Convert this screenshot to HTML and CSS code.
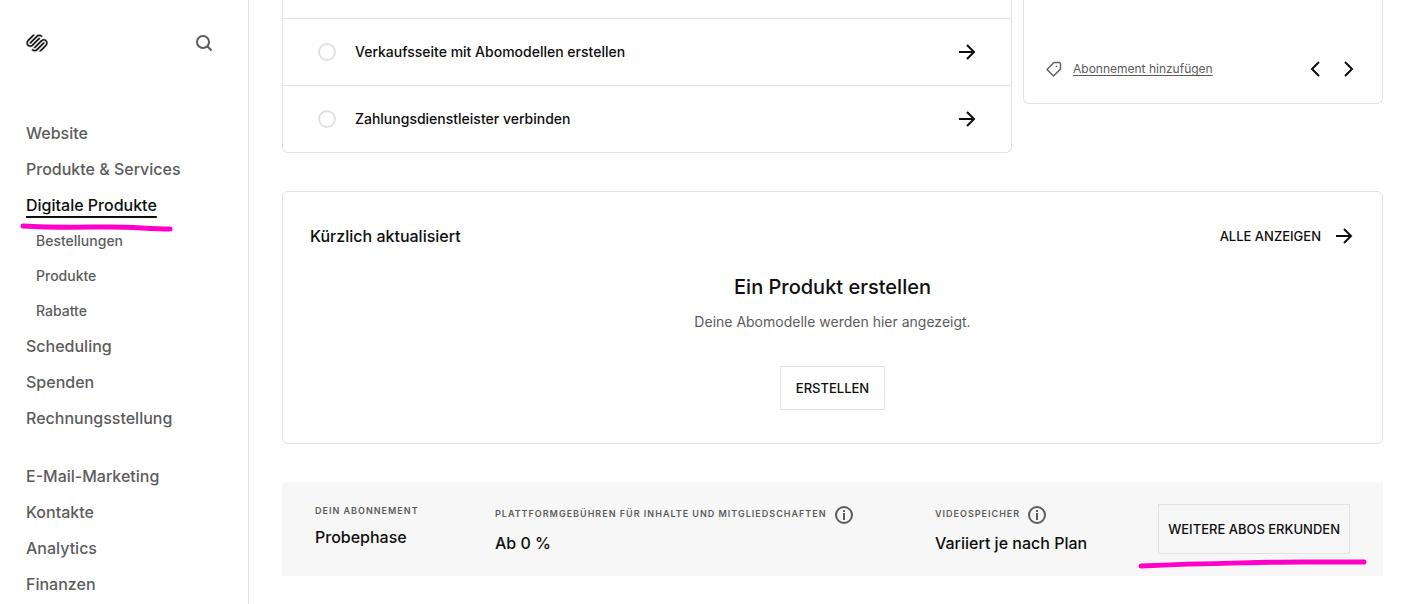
FILE: index.html
```
<!DOCTYPE html>
<html lang="de">
<head>
  <meta charset="UTF-8">
  <meta name="viewport" content="width=device-width, initial-scale=1.0">
  <title>Digitale Produkte</title>
  <link rel="stylesheet" href="styles.css">
</head>
<body>
  <svg class="sprite" aria-hidden="true">
    <symbol id="arrow" viewBox="0 0 18 16">
      <path d="M1 8h15M9 1l7 7-7 7" fill="none" stroke="currentColor" stroke-width="2"/>
    </symbol>
    <symbol id="info" viewBox="0 0 18 18">
      <circle cx="9" cy="9" r="8" fill="none" stroke="currentColor" stroke-width="2"/>
      <path d="M8 4h2v2H8zM8 7h2v7H8z" fill="currentColor"/>
    </symbol>
  </svg>

  <aside class="sidebar">
    <div class="sidebar-top">
      <a href="#" aria-label="Startseite">
        <svg class="logo" viewBox="0 0 24 24"><path d="M22.655 8.719c-1.802-1.801-4.726-1.801-6.564 0l-7.351 7.35c-.45.45-.45 1.2 0 1.65.45.449 1.2.449 1.65 0l7.351-7.351c.899-.899 2.362-.899 3.264 0 .9.9.9 2.364 0 3.264l-7.239 7.239c.9.899 2.362.899 3.263 0l5.589-5.589c1.836-1.838 1.836-4.763.037-6.563zm-2.475 2.437c-.451-.45-1.201-.45-1.65 0l-7.354 7.389c-.9.899-2.361.899-3.262 0-.45-.45-1.2-.45-1.65 0s-.45 1.2 0 1.649c1.801 1.801 4.726 1.801 6.564 0l7.351-7.35c.449-.487.449-1.239.001-1.688zm-2.439-7.35c-1.801-1.801-4.726-1.801-6.564 0l-7.351 7.351c-.45.449-.45 1.199 0 1.649s1.2.45 1.65 0l7.395-7.351c.9-.899 2.371-.899 3.27 0 .451.45 1.201.45 1.65 0 .421-.487.421-1.199-.029-1.649h-.021zm-2.475 2.437c-.45-.45-1.2-.45-1.65 0l-7.351 7.389c-.899.9-2.363.9-3.265 0-.9-.899-.9-2.363 0-3.264l7.239-7.239c-.9-.9-2.362-.9-3.263 0L1.35 8.719c-1.8 1.8-1.8 4.725 0 6.563 1.801 1.801 4.725 1.801 6.564 0l7.35-7.351c.451-.488.451-1.238 0-1.688h.002z"/></svg>
      </a>
      <button class="icon-btn search" aria-label="Suchen">
        <svg width="16" height="16" viewBox="0 0 16 16" fill="none" stroke="currentColor" stroke-width="2"><circle cx="7" cy="7" r="6"/><path d="M11 11l4.500 4.500"/></svg>
      </button>
    </div>
    <nav>
      <ul class="menu">
        <li><a href="#">Website</a></li>
        <li><a href="#">Produkte &amp; Services</a></li>
        <li class="current">
          <a href="#" aria-current="page">Digitale Produkte</a>
          <svg class="marker marker-nav" viewBox="0 0 154 10"><path d="M3 3C35 5 65 4 90 4S128 6 150 6"/></svg>
        </li>
        <li>
          <ul class="submenu">
            <li><a href="#">Bestellungen</a></li>
            <li><a href="#">Produkte</a></li>
            <li><a href="#">Rabatte</a></li>
          </ul>
        </li>
        <li><a href="#">Scheduling</a></li>
        <li><a href="#">Spenden</a></li>
        <li><a href="#">Rechnungsstellung</a></li>
      </ul>
      <ul class="menu">
        <li><a href="#">E-Mail-Marketing</a></li>
        <li><a href="#">Kontakte</a></li>
        <li><a href="#">Analytics</a></li>
        <li><a href="#">Finanzen</a></li>
      </ul>
    </nav>
  </aside>

  <main>
    <div class="top-row">
      <ul class="card tasks">
        <li class="task-end"></li>
        <li>
          <a class="task" href="#">
            <span class="status"></span>
            <span class="task-title">Verkaufsseite mit Abomodellen erstellen</span>
            <svg class="arrow"><use href="#arrow"/></svg>
          </a>
        </li>
        <li>
          <a class="task" href="#">
            <span class="status"></span>
            <span class="task-title">Zahlungsdienstleister verbinden</span>
            <svg class="arrow"><use href="#arrow"/></svg>
          </a>
        </li>
      </ul>
      <div class="card tip">
        <svg class="tag" width="16" height="16" viewBox="0 0 16 16" fill="none" stroke="currentColor"><path d="M8 1.500H13.500L14.500 2.500V8L7.500 15L1 8.500Z" stroke-width="1.400" stroke-linejoin="round"/><circle cx="10.500" cy="5.200" r=".8" fill="currentColor" stroke="none"/></svg>
        <a class="tip-link" href="#">Abonnement hinzufügen</a>
        <div class="pager">
          <button class="icon-btn" aria-label="Zurück"><svg width="10" height="16" viewBox="0 0 10 16"><path d="M9 1L2 8l7 7"/></svg></button>
          <button class="icon-btn" aria-label="Weiter"><svg width="10" height="16" viewBox="0 0 10 16"><path d="M1 1l7 7-7 7"/></svg></button>
        </div>
      </div>
    </div>

    <section class="card recent">
      <div class="recent-head">
        <h2>Kürzlich aktualisiert</h2>
        <a class="show-all" href="#">ALLE ANZEIGEN <svg class="arrow"><use href="#arrow"/></svg></a>
      </div>
      <div class="empty">
        <h3>Ein Produkt erstellen</h3>
        <p>Deine Abomodelle werden hier angezeigt.</p>
        <button class="btn">ERSTELLEN</button>
      </div>
    </section>

    <section class="plan">
      <div class="plan-item">
        <div class="plan-label">DEIN ABONNEMENT</div>
        <div class="plan-value">Probephase</div>
      </div>
      <div class="plan-item">
        <div class="plan-label">PLATTFORMGEBÜHREN FÜR INHALTE UND MITGLIEDSCHAFTEN
          <button class="icon-btn info-btn" aria-label="Info zu Gebühren"><svg class="info"><use href="#info"/></svg></button>
        </div>
        <div class="plan-value">Ab 0 %</div>
      </div>
      <div class="plan-item">
        <div class="plan-label">VIDEOSPEICHER
          <button class="icon-btn info-btn" aria-label="Info zum Videospeicher"><svg class="info"><use href="#info"/></svg></button>
        </div>
        <div class="plan-value">Variiert je nach Plan</div>
      </div>
      <div class="plan-action">
        <button class="btn btn-plan">WEITERE ABOS ERKUNDEN</button>
        <svg class="marker marker-plan" viewBox="0 0 230 12"><path d="M3 8C70 5 150 4 165 4S200 4 226 4"/></svg>
      </div>
    </section>
  </main>
</body>
</html>
```
FILE: styles.css
```
* {
  box-sizing: border-box;
}

body {
  margin: 0;
  display: flex;
  min-height: 100vh;
  font-family: Inter, "Liberation Sans", sans-serif;
  font-weight: 500;
  color: #0e0e0e;
  background: #fff;
}

ul, h2, h3, p {
  margin: 0;
  padding: 0;
  list-style: none;
}

a {
  color: inherit;
  text-decoration: none;
}

svg {
  display: block;
  flex: none;
}

.sprite {
  position: absolute;
  width: 0;
  height: 0;
}

.icon-btn {
  padding: 0;
  border: none;
  background: none;
  color: inherit;
  cursor: pointer;
}

/* sidebar */

.sidebar {
  flex: none;
  width: 249px;
  padding: 32px 36px 0 26px;
  border-right: 1px solid #e2e2e2;
  color: #5c5c5c;
}

.sidebar-top {
  display: flex;
  justify-content: space-between;
  align-items: center;
  height: 22px;
  margin-bottom: 61px;
}

.logo {
  width: 22px;
  height: 22px;
  fill: #0e0e0e;
  stroke: #fff;
  stroke-width: 0.6;
}

.menu {
  margin-bottom: 22px;
  font-size: 16px;
  line-height: 36px;
}

.menu:last-child {
  margin-bottom: 0;
}

.submenu {
  padding-left: 10px;
  font-size: 14px;
  line-height: 35px;
}

.current {
  position: relative;
  height: 36px;
  color: #0e0e0e;
}

.current a {
  text-decoration: underline;
  text-decoration-thickness: 2px;
  text-underline-offset: 5px;
  text-decoration-skip-ink: none;
}

.marker {
  position: absolute;
  fill: none;
  stroke: #ff00c8;
  stroke-width: 5;
  stroke-linecap: round;
}

.marker-nav {
  left: -6px;
  top: 36px;
  width: 154px;
  height: 10px;
}

/* content */

main {
  flex: 1;
  min-width: 0;
  padding: 0 25px 28px 33px;
}

.card {
  border: 1px solid #e2e2e2;
  border-radius: 6px;
}

.top-row {
  display: flex;
  align-items: flex-start;
  gap: 11px;
  margin-bottom: 38px;
}

.tasks {
  flex: 1;
  border-top: none;
  border-top-left-radius: 0;
  border-top-right-radius: 0;
}

.task-end {
  height: 18px;
}

.task {
  display: flex;
  align-items: center;
  height: 67px;
  padding: 0 35px;
  border-top: 1px solid #e2e2e2;
  font-size: 14px;
  line-height: 20px;
}

.status {
  width: 18px;
  height: 18px;
  margin-right: 19px;
  border: 2px solid #e2e2e2;
  border-radius: 50%;
}

.task-title {
  flex: 1;
}

.arrow {
  width: 18px;
  height: 16px;
}

.tip {
  flex: none;
  display: flex;
  align-items: center;
  width: 360px;
  padding: 57px 28px 22px 22px;
  border-top: none;
  border-top-left-radius: 0;
  border-top-right-radius: 0;
  color: #5c5c5c;
}

.tip-link {
  margin-left: 11px;
  font-size: 12px;
  font-weight: 400;
  line-height: 24px;
  text-decoration: underline;
  text-decoration-skip-ink: none;
  text-underline-offset: 2px;
}

.pager {
  display: flex;
  gap: 24px;
  margin-left: auto;
  color: #0e0e0e;
}

.pager path {
  fill: none;
  stroke: currentColor;
  stroke-width: 2;
}

.recent {
  margin-bottom: 38px;
  padding: 32px 29px 33px 27px;
}

.recent-head {
  display: flex;
  justify-content: space-between;
  align-items: center;
  height: 24px;
}

h2, h3 {
  font-weight: 500;
}

h2 {
  font-size: 16px;
}

.show-all {
  display: flex;
  align-items: center;
  gap: 14px;
  font-size: 13px;
}

.empty {
  display: flex;
  flex-direction: column;
  align-items: center;
  padding: 25px 0 0 2px;
}

h3 {
  font-size: 20px;
  line-height: 28px;
}

.empty p {
  margin: 11px 0 34px;
  font-size: 14px;
  font-weight: 400;
  line-height: 20px;
  color: #5c5c5c;
}

.btn {
  height: 44px;
  padding: 0 15px;
  border: 1px solid #e2e2e2;
  background: none;
  font-family: inherit;
  font-size: 13px;
  font-weight: 500;
  color: #0e0e0e;
  cursor: pointer;
}

/* plan bar */

.plan {
  display: grid;
  grid-template-columns: 180px 440px 1fr auto;
  padding: 22px 33px 21px;
  background: #f7f7f7;
}

.plan-label {
  display: flex;
  align-items: center;
  gap: 8px;
  font-size: 9px;
  font-weight: 600;
  line-height: 14px;
  letter-spacing: 1px;
  color: #5c5c5c;
}

.info-btn {
  padding: 2px 0 0;
}

.info {
  width: 18px;
  height: 18px;
}

.plan-value {
  margin-top: 7px;
  font-size: 16px;
  line-height: 24px;
}

.plan-action {
  position: relative;
}

.btn-plan {
  height: 50px;
  padding: 0 9px;
}

.marker-plan {
  right: -18px;
  top: 54px;
  width: 230px;
  height: 12px;
}
```
